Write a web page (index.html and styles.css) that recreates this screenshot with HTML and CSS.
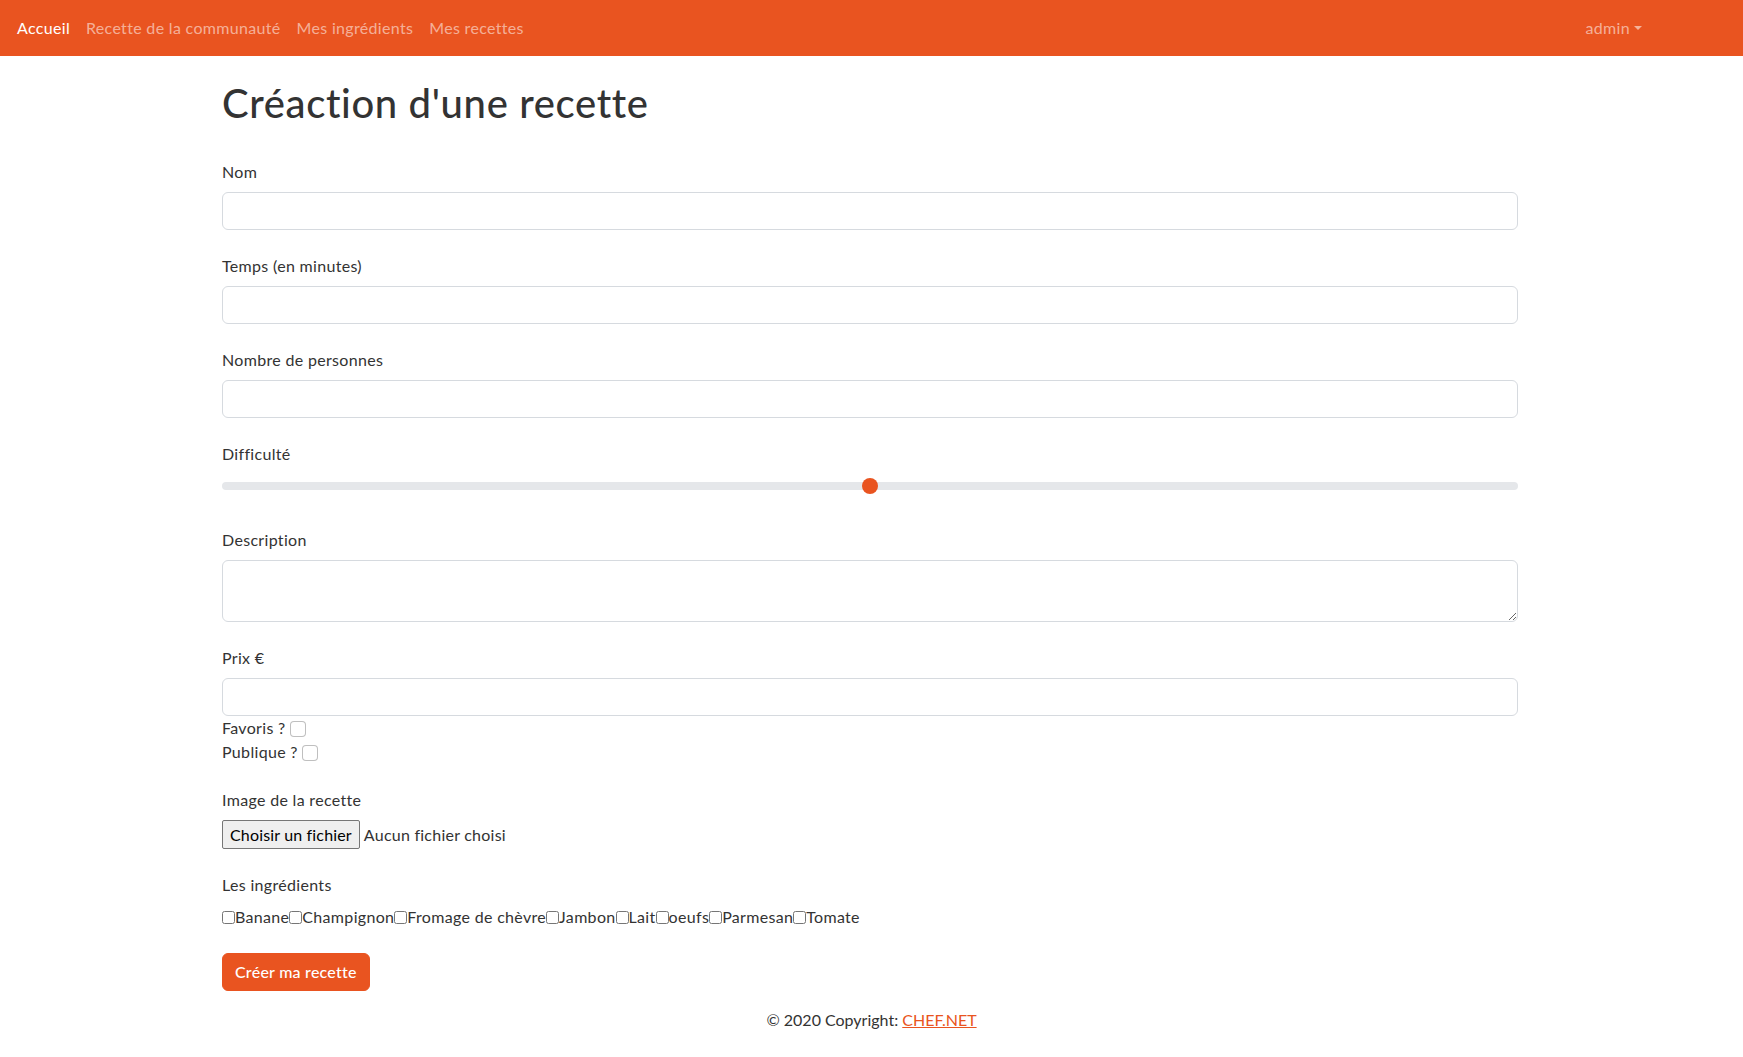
FILE: index.html
```html
<!DOCTYPE html>
<html lang="fr">
<head>
<meta charset="utf-8">
<title>Créaction d'une recette</title>
<link rel="stylesheet" href="styles.css">
</head>
<body>
<nav class="navbar">
  <ul class="nav-links">
    <li><a class="nav-link active" href="#">Accueil</a></li>
    <li><a class="nav-link" href="#">Recette de la communauté</a></li>
    <li><a class="nav-link" href="#">Mes ingrédients</a></li>
    <li><a class="nav-link" href="#">Mes recettes</a></li>
  </ul>
  <div class="nav-user">
    <a class="nav-link dropdown-toggle" href="#">admin</a>
  </div>
</nav>

<main class="container">
  <h1 class="title">Créaction d'une recette</h1>
  <form class="recipe-form">
    <div class="group">
      <label class="label" for="nom">Nom</label>
      <input class="control" id="nom" type="text">
    </div>
    <div class="group">
      <label class="label" for="temps">Temps (en minutes)</label>
      <input class="control" id="temps" type="text">
    </div>
    <div class="group">
      <label class="label" for="nb">Nombre de personnes</label>
      <input class="control" id="nb" type="text">
    </div>
    <div class="group group-range">
      <label class="label" for="diff">Difficulté</label>
      <input class="range" id="diff" type="range" min="0" max="10" value="5">
    </div>
    <div class="group">
      <label class="label" for="desc">Description</label>
      <textarea class="control textarea" id="desc" rows="2"></textarea>
    </div>
    <div class="group">
      <label class="label" for="prix">Prix €</label>
      <input class="control" id="prix" type="text">
      <div class="check-line">Favoris ? <input class="check" type="checkbox"></div>
      <div class="check-line">Publique ? <input class="check" type="checkbox"></div>
    </div>
    <div class="group">
      <label class="label">Image de la recette</label>
      <div class="file-row">
        <button type="button" class="file-btn">Choisir un fichier</button>
        <span class="file-name">Aucun fichier choisi</span>
      </div>
    </div>
    <div class="group">
      <label class="label">Les ingrédients</label>
      <div class="ingredients"><input type="checkbox" class="native-check">Banane<input type="checkbox" class="native-check">Champignon<input type="checkbox" class="native-check">Fromage de chèvre<input type="checkbox" class="native-check">Jambon<input type="checkbox" class="native-check">Lait<input type="checkbox" class="native-check">oeufs<input type="checkbox" class="native-check">Parmesan<input type="checkbox" class="native-check">Tomate</div>
    </div>
    <button type="submit" class="btn-primary">Créer ma recette</button>
  </form>
</main>

<footer class="footer">
  © 2020 Copyright: <a class="footer-link" href="#">CHEF.NET</a>
</footer>
</body>
</html>
```

FILE: styles.css
```css
* { box-sizing: border-box; }

html, body {
  margin: 0;
  padding: 0;
}

body {
  font-family: "Lato", "Open Sans", sans-serif;
  font-size: 16px;
  line-height: 24px;
  letter-spacing: 0.02em;
  color: #333333;
  background: #ffffff;
}

.navbar {
  height: 56px;
  background: #e95420;
  display: flex;
  align-items: center;
  justify-content: space-between;
  padding: 0 101px 0 8px;
}

.nav-links {
  list-style: none;
  margin: 0;
  padding: 0;
  display: flex;
}

.nav-link {
  display: block;
  padding: 8px 8px;
  color: rgba(255, 255, 255, 0.55);
  text-decoration: none;
  line-height: 24px;
}

.nav-links li:first-child .nav-link {
  padding-left: 9px;
}

.nav-link.active {
  color: #ffffff;
}

.dropdown-toggle::after {
  content: "";
  display: inline-block;
  margin-left: 0.255em;
  vertical-align: 0.255em;
  border-top: 0.3em solid;
  border-right: 0.3em solid transparent;
  border-left: 0.3em solid transparent;
  border-bottom: 0;
}

.nav-user .nav-link {
  padding-right: 0;
}

.container {
  max-width: 1296px;
  margin-left: max(0px, calc(50% - 649.5px));
  margin-right: auto;
}

.title {
  font-size: 40px;
  line-height: 48px;
  font-weight: 500;
  letter-spacing: 0.016em;
  margin: 23px 0 33px;
  color: #333333;
}

.group {
  margin-bottom: 24px;
}

.group-range {
  margin-bottom: 30px;
}

.label {
  display: block;
  margin-bottom: 8px;
}

.control {
  display: block;
  width: 100%;
  height: 38px;
  padding: 6px 12px;
  font: inherit;
  color: #333333;
  background: #ffffff;
  border: 1px solid #d6dadf;
  border-radius: 6px;
}

.textarea {
  height: 62px;
  resize: vertical;
}

.range {
  -webkit-appearance: none;
  appearance: none;
  display: block;
  width: 100%;
  height: 24px;
  margin: 0;
  padding: 0;
  background: transparent;
}

.range::-webkit-slider-runnable-track {
  height: 8px;
  background: #e5e7ea;
  border-radius: 16px;
}

.range::-webkit-slider-thumb {
  -webkit-appearance: none;
  width: 16px;
  height: 16px;
  margin-top: -4px;
  border-radius: 50%;
  background: #e95420;
  border: 0;
}

.check-line {
  line-height: 24px;
}

.check {
  -webkit-appearance: none;
  appearance: none;
  width: 16px;
  height: 16px;
  margin: 0;
  vertical-align: -3px;
  border: 1px solid rgba(0, 0, 0, 0.25);
  border-radius: 4px;
  background: #ffffff;
}

.file-row {
  display: flex;
  align-items: center;
  height: 29px;
}

.file-btn {
  height: 29px;
  padding: 0 7px;
  margin: 0 4px 0 0;
  font-family: "Lato", "Open Sans", sans-serif;
  font-size: 16px;
  letter-spacing: 0.01em;
  color: #000000;
  background: #efefef;
  border: 1px solid #767676;
  border-radius: 2px;
}

.file-name {
  font-size: 16px;
  letter-spacing: 0.015em;
}

.ingredients {
  line-height: 24px;
}

.native-check {
  width: 13px;
  height: 13px;
  margin: 0;
  vertical-align: -1px;
}

.btn-primary {
  display: inline-block;
  height: 38px;
  padding: 6px 12px;
  font: inherit;
  font-weight: 500;
  letter-spacing: 0.015em;
  color: #ffffff;
  background: #e95420;
  border: 1px solid #e95420;
  border-radius: 6px;
}

.footer {
  text-align: center;
  padding: 17px 0 25px;
  line-height: 24px;
  letter-spacing: 0;
}

.footer-link {
  color: #e95420;
  text-decoration: underline;
}
```
